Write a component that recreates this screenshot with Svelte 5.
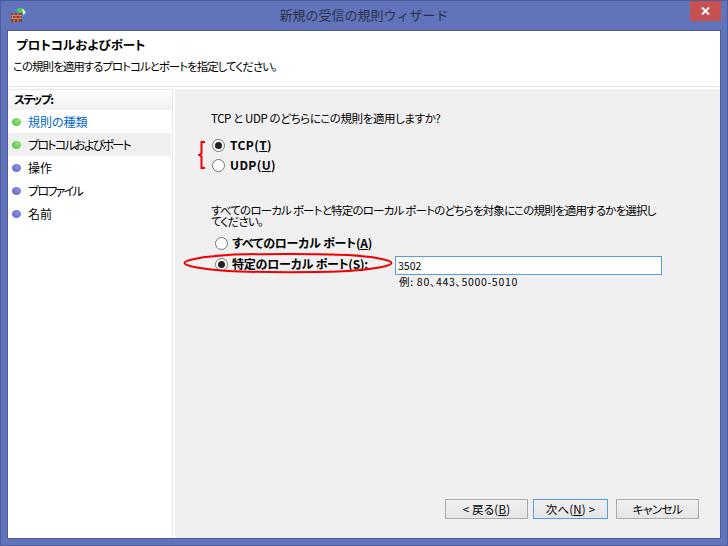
<script>
    const steps = [
        { label: '規則の種類', done: true, link: true },
        { label: 'プロトコルおよびポート', done: true, current: true, tight: true },
        { label: '操作' },
        { label: 'プロファイル', tight: true },
        { label: '名前' }
    ];
</script>

<div class="window">
    <div class="titlebar">
        <svg class="app-icon" width="17" height="17" viewBox="0 0 17 17">
            <circle cx="10" cy="6" r="5.500" fill="#2f8fd8"/>
            <path d="M7 2 Q10 0 12 2 Q13 5 10 6 Q7 5 7 2Z" fill="#58c850"/>
            <path d="M12 1.500 Q15.500 3 15.500 6 L13 8 Z" fill="#e8f4a0"/>
            <rect x="1" y="6" width="11" height="9" fill="#8f3f30"/>
            <path d="M1 8.500H12M1 11.500H12M4 6V8.500M8 6V8.500M2.500 8.500V11.500M6 8.500V11.500M10 8.500V11.500M4 11.500V15M8 11.500V15" stroke="#c98a76" stroke-width="1" fill="none"/>
        </svg>
        <span class="title">新規の受信の規則ウィザード</span>
        <div class="close">
            <svg width="9" height="8" viewBox="0 0 9 8"><path d="M1 0.500L8 7.500M8 0.500L1 7.500" stroke="#fff" stroke-width="2" fill="none"/></svg>
        </div>
    </div>

    <div class="client">
        <header class="head">
            <h1>プロトコルおよびポート</h1>
            <p>この規則を適用するプロトコルとポートを指定してください。</p>
        </header>

        <div class="body">
            <aside class="steps">
                <div class="steps-title">ステップ:</div>
                <ul>
                    {#each steps as s}
                        <li class:current={s.current}>
                            <span class="dot" class:done={s.done}></span>
                            <span class:link={s.link} class:tight={s.tight}>{s.label}</span>
                        </li>
                    {/each}
                </ul>
            </aside>

            <main class="pane">
                <p class="q1">TCP と UDP のどちらにこの規則を適用しますか?</p>
                <div class="proto">
                    <svg class="brace" width="8" height="28" viewBox="0 0 8 28">
                        <path d="M7 1H3.500V12.500L1 14L3.500 15.500V27H7" stroke="#f00000" stroke-width="2" fill="none"/>
                    </svg>
                    <label class="radio"><span class="mark on"></span><b>TCP(<u>T</u>)</b></label>
                    <label class="radio"><span class="mark"></span><b>UDP(<u>U</u>)</b></label>
                </div>
                <p class="q2">すべてのローカル ポートと特定のローカル ポートのどちらを対象にこの規則を適用するかを選択してください。</p>
                <div class="ports">
                    <label class="radio"><span class="mark"></span><b>すべてのローカル ポート(<u>A</u>)</b></label>
                    <div class="specific">
                        <svg class="ring" width="210" height="22" viewBox="0 0 210 22">
                            <path d="M1.500 11C1.500 8 20 4.500 45 3C70 1.500 140 1.500 165 3C190 4.500 208.500 8 208.500 11C208.500 14 190 17.500 165 19C140 20.500 70 20.500 45 19C20 17.500 1.500 14 1.500 11Z" stroke="#f00000" stroke-width="2" fill="none"/>
                        </svg>
                        <label class="radio"><span class="mark on"></span><b>特定のローカル ポート(<u>S</u>):</b></label>
                        <div class="input">3502</div>
                    </div>
                    <div class="hint">例: 80、443、5000-5010</div>
                </div>
                <div class="buttons">
                    <button>&lt; 戻る(<u>B</u>)</button>
                    <button class="primary">次へ(<u>N</u>) &gt;</button>
                    <button class="cancel">キャンセル</button>
                </div>
            </main>
        </div>
    </div>
</div>

<style>
    :global(body) {
        margin: 0;
    }

    .window {
        box-sizing: border-box;
        width: 728px;
        height: 546px;
        display: flex;
        flex-direction: column;
        background: #6073bb;
        border: 1px solid #4c5c9c;
        padding: 0 6px 6px;
        font-family: "Noto Sans CJK JP", "Liberation Sans", sans-serif;
        font-feature-settings: "palt";
        font-size: 11.500px;
        color: #000;
    }

    .titlebar {
        position: relative;
        height: 29px;
        flex: none;
        display: flex;
        align-items: center;
        justify-content: center;
    }

    .app-icon {
        position: absolute;
        left: 3px;
        top: 6px;
    }

    .title {
        font-size: 13px;
        font-feature-settings: normal;
        color: #2d3148;
        margin-bottom: 3px;
    }

    .close {
        position: absolute;
        right: 0;
        top: 0;
        width: 31px;
        height: 20px;
        background: #c75050;
        display: flex;
        align-items: center;
        justify-content: center;
    }

    .client {
        flex: 1;
        display: flex;
        flex-direction: column;
        background: #fff;
        border: 1px solid #4c5c9c;
        min-height: 0;
    }

    .head {
        height: 56px;
        flex: none;
        box-sizing: border-box;
        padding: 6px 5px 0;
        border-bottom: 1px solid #e8e8e8;
    }

    h1 {
        margin: 0 0 0 3px;
        font-size: 12.500px;
        line-height: 16px;
        font-weight: 700;
    }

    .head p {
        margin: 6px 0 0;
        line-height: 14px;
        letter-spacing: -1px;
    }

    .body {
        flex: 1;
        display: flex;
        margin-top: 2px;
        min-height: 0;
    }

    .steps {
        width: 165px;
        flex: none;
        box-sizing: border-box;
        border-right: 1px solid #e8e8e8;
        border-top: 1px solid #e8e8e8;
    }

    .steps-title {
        height: 20px;
        padding-left: 6px;
        font-weight: 700;
        line-height: 19px;
        letter-spacing: -1.400px;
        background: linear-gradient(#fff, #f0f0f0);
    }

    .steps ul {
        list-style: none;
        margin: 0;
        padding: 0;
    }

    .steps li {
        height: 23px;
        display: flex;
        align-items: center;
        gap: 7px;
        padding-left: 4px;
        margin-right: 1px;
        font-size: 12px;
    }

    .steps li.current {
        background: #f0f0f0;
    }

    .dot {
        width: 9px;
        height: 8px;
        border-radius: 50%;
        background: radial-gradient(circle at 60% 35%, #8f8fe8, #5b5bc0);
    }

    .dot.done {
        background: radial-gradient(circle at 60% 35%, #96e67a, #3fb52f);
    }

    .link {
        color: #0066cc;
    }

    .tight {
        letter-spacing: -1.700px;
    }

    .pane {
        flex: 1;
        margin-left: 2px;
        background: #f0f0f0;
        padding: 22px 0 0 36px;
        display: flex;
        flex-direction: column;
        min-width: 0;
    }

    .q1 {
        margin: 0;
        line-height: 14px;
        letter-spacing: -0.400px;
    }

    .proto {
        position: relative;
        margin-top: 13px;
        display: flex;
        flex-direction: column;
        gap: 6px;
        margin-left: 1px;
    }

    .proto b {
        letter-spacing: 0.400px;
    }

    .brace {
        position: absolute;
        left: -14px;
        top: 3px;
    }

    .radio {
        display: flex;
        align-items: center;
        gap: 5px;
        height: 14px;
        font-size: 12px;
    }

    .radio b {
        margin-top: -2px;
    }

    .mark {
        box-sizing: border-box;
        width: 13px;
        height: 13px;
        border: 1px solid #777;
        border-radius: 50%;
        background: #fff;
        display: flex;
        align-items: center;
        justify-content: center;
        flex: none;
    }

    .mark.on::after {
        content: "";
        width: 7px;
        height: 7px;
        border-radius: 50%;
        background: #222;
    }

    .q2 {
        margin: 33px 0 0;
        width: 452px;
        line-height: 11px;
        letter-spacing: -0.800px;
    }

    .ports {
        margin-top: 9px;
        margin-left: 4px;
        display: flex;
        flex-direction: column;
        gap: 6px;
    }

    .ports b {
        letter-spacing: -0.200px;
        margin-left: -1px;
    }

    .specific {
        position: relative;
        display: flex;
        align-items: flex-start;
        height: 19px;
    }

    .specific .radio {
        margin-top: 1px;
    }

    .ring {
        position: absolute;
        left: -32px;
        top: -4px;
    }

    .input {
        box-sizing: border-box;
        position: absolute;
        left: 180px;
        top: 0;
        width: 267px;
        height: 19px;
        border: 1px solid #569de5;
        background: #fff;
        padding-left: 2px;
        line-height: 17px;
        font-size: 10.500px;
    }

    .hint {
        margin-left: 184px;
        margin-top: -6px;
        font-size: 10.500px;
        line-height: 13px;
        letter-spacing: 0.700px;
    }

    .buttons {
        margin-top: auto;
        margin-bottom: 19px;
        display: flex;
        justify-content: flex-end;
        padding-right: 21px;
    }

    button {
        box-sizing: border-box;
        width: 83px;
        height: 20px;
        padding: 0;
        border: 1px solid #acacac;
        background: linear-gradient(#f0f0f0, #e5e5e5);
        font: inherit;
        font-feature-settings: "palt";
        line-height: 16px;
        letter-spacing: 0.200px;
        color: #000;
    }

    button.primary {
        width: 75px;
        margin: 0 8px 0 5px;
        border-color: #569de5;
    }

    button.cancel {
        letter-spacing: -0.500px;
    }
</style>
